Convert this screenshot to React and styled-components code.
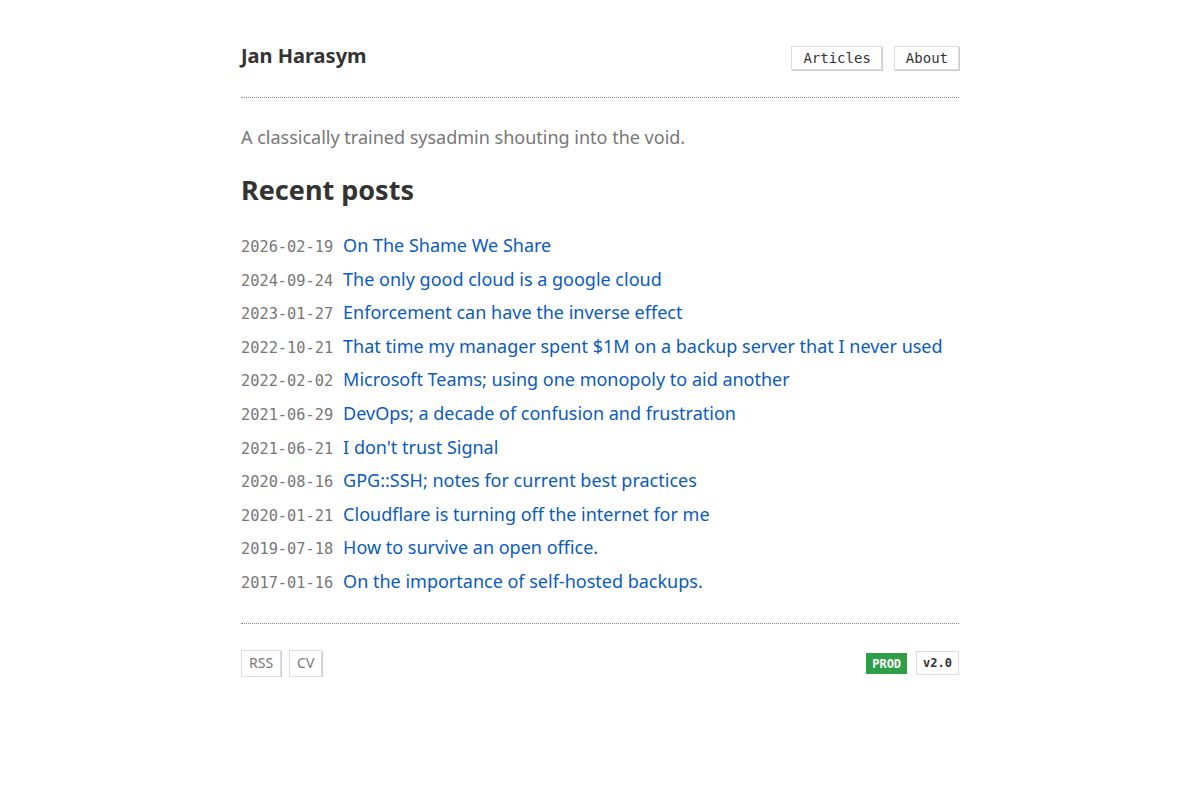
import React from "react";
import styled, { createGlobalStyle } from "styled-components";

const GlobalStyle = createGlobalStyle`
    html, body {
        margin: 0;
        padding: 0;
        background: #fff;
        color: #333;
        font-family: "Noto Sans", "DejaVu Sans", sans-serif;
    }
`;

const mono = `"DejaVu Sans Mono", "Liberation Mono", monospace`;

// page column
const Page = styled.div`
    max-width: 718px;
    margin: 0 auto;
    padding: 42px 0 0;
`;

// header
const Header = styled.header`
    display: flex;
    justify-content: space-between;
    align-items: flex-start;
    padding-bottom: 27px;
    border-bottom: 1px dotted #888;
`;

const Name = styled.h1`
    margin: 0;
    font-size: 20px;
    font-weight: 700;
    color: #333;
    line-height: 28px;
`;

const Nav = styled.nav`
    display: flex;
    gap: 12px;
    margin-top: 4px;
`;

const Box = styled.a`
    display: inline-block;
    border: 1px solid #ddd;
    box-shadow: 1px 1px 0 #ccc;
    padding: ${({ $pad }) => $pad || "2px 10px 2px 11px"};
    font-family: ${({ $mono }) => ($mono ? mono : `"Noto Sans", sans-serif`)};
    font-size: 14px;
    line-height: 18px;
    color: ${({ $mono }) => ($mono ? "#333" : "#777")};
    text-decoration: none;
    background: #fff;
`;

const Tagline = styled.p`
    margin: 26px 0 0;
    font-size: 18px;
    line-height: 26px;
    color: #777;
`;

const Heading = styled.h2`
    margin: 22px 0 25px;
    font-size: 27px;
    font-weight: 700;
    line-height: 36px;
    color: #333;
`;

const Posts = styled.ul`
    list-style: none;
    margin: 0;
    padding: 0;
`;

const Post = styled.li`
    display: flex;
    align-items: baseline;
    gap: 10px;
    height: 33.6px;
`;

const PostDate = styled.span`
    font-family: ${mono};
    font-size: 15.3px;
    color: #777;
`;

const PostLink = styled.a`
    font-size: 18px;
    color: #0a5bbf;
    text-decoration: none;
`;

const Footer = styled.footer`
    display: flex;
    justify-content: space-between;
    align-items: center;
    margin-top: 20px;
    padding-top: 26px;
    border-top: 1px dotted #888;
`;

const Links = styled.div`
    display: flex;
    gap: 8px;
`;

const Badges = styled.div`
    display: flex;
    align-items: center;
    gap: 9px;
`;

const Badge = styled.span`
    display: inline-block;
    font-family: ${mono};
    font-size: 12px;
    font-weight: 700;
    line-height: 16px;
    padding: ${({ $env }) => ($env ? "3px 6px 2px" : "3px 6px")};
    color: ${({ $env }) => ($env ? "#fff" : "#333")};
    background: ${({ $env }) => ($env ? "#2e9e47" : "#fff")};
    border: ${({ $env }) => ($env ? "none" : "1px solid #ddd")};
`;

const posts = [
    ["2026-02-19", "On The Shame We Share"],
    ["2024-09-24", "The only good cloud is a google cloud"],
    ["2023-01-27", "Enforcement can have the inverse effect"],
    ["2022-10-21", "That time my manager spent $1M on a backup server that I never used"],
    ["2022-02-02", "Microsoft Teams; using one monopoly to aid another"],
    ["2021-06-29", "DevOps; a decade of confusion and frustration"],
    ["2021-06-21", "I don't trust Signal"],
    ["2020-08-16", "GPG::SSH; notes for current best practices"],
    ["2020-01-21", "Cloudflare is turning off the internet for me"],
    ["2019-07-18", "How to survive an open office."],
    ["2017-01-16", "On the importance of self-hosted backups."],
];

export default function App() {
    return (
        <>
            <GlobalStyle />
            <Page>
                <Header>
                    <Name>Jan Harasym</Name>
                    <Nav>
                        <Box $mono href="#">Articles</Box>
                        <Box $mono href="#">About</Box>
                    </Nav>
                </Header>
                <Tagline>A classically trained sysadmin shouting into the void.</Tagline>
                <Heading>Recent posts</Heading>
                <Posts>
                    {posts.map(([date, title]) => (
                        <Post key={date + title}>
                            <PostDate>{date}</PostDate>
                            <PostLink href="#">{title}</PostLink>
                        </Post>
                    ))}
                </Posts>
                <Footer>
                    <Links>
                        <Box href="#" $pad="3px 7px 4px">RSS</Box>
                        <Box href="#" $pad="3px 7px 4px">CV</Box>
                    </Links>
                    <Badges>
                        <Badge $env>PROD</Badge>
                        <Badge>v2.0</Badge>
                    </Badges>
                </Footer>
            </Page>
        </>
    );
}
